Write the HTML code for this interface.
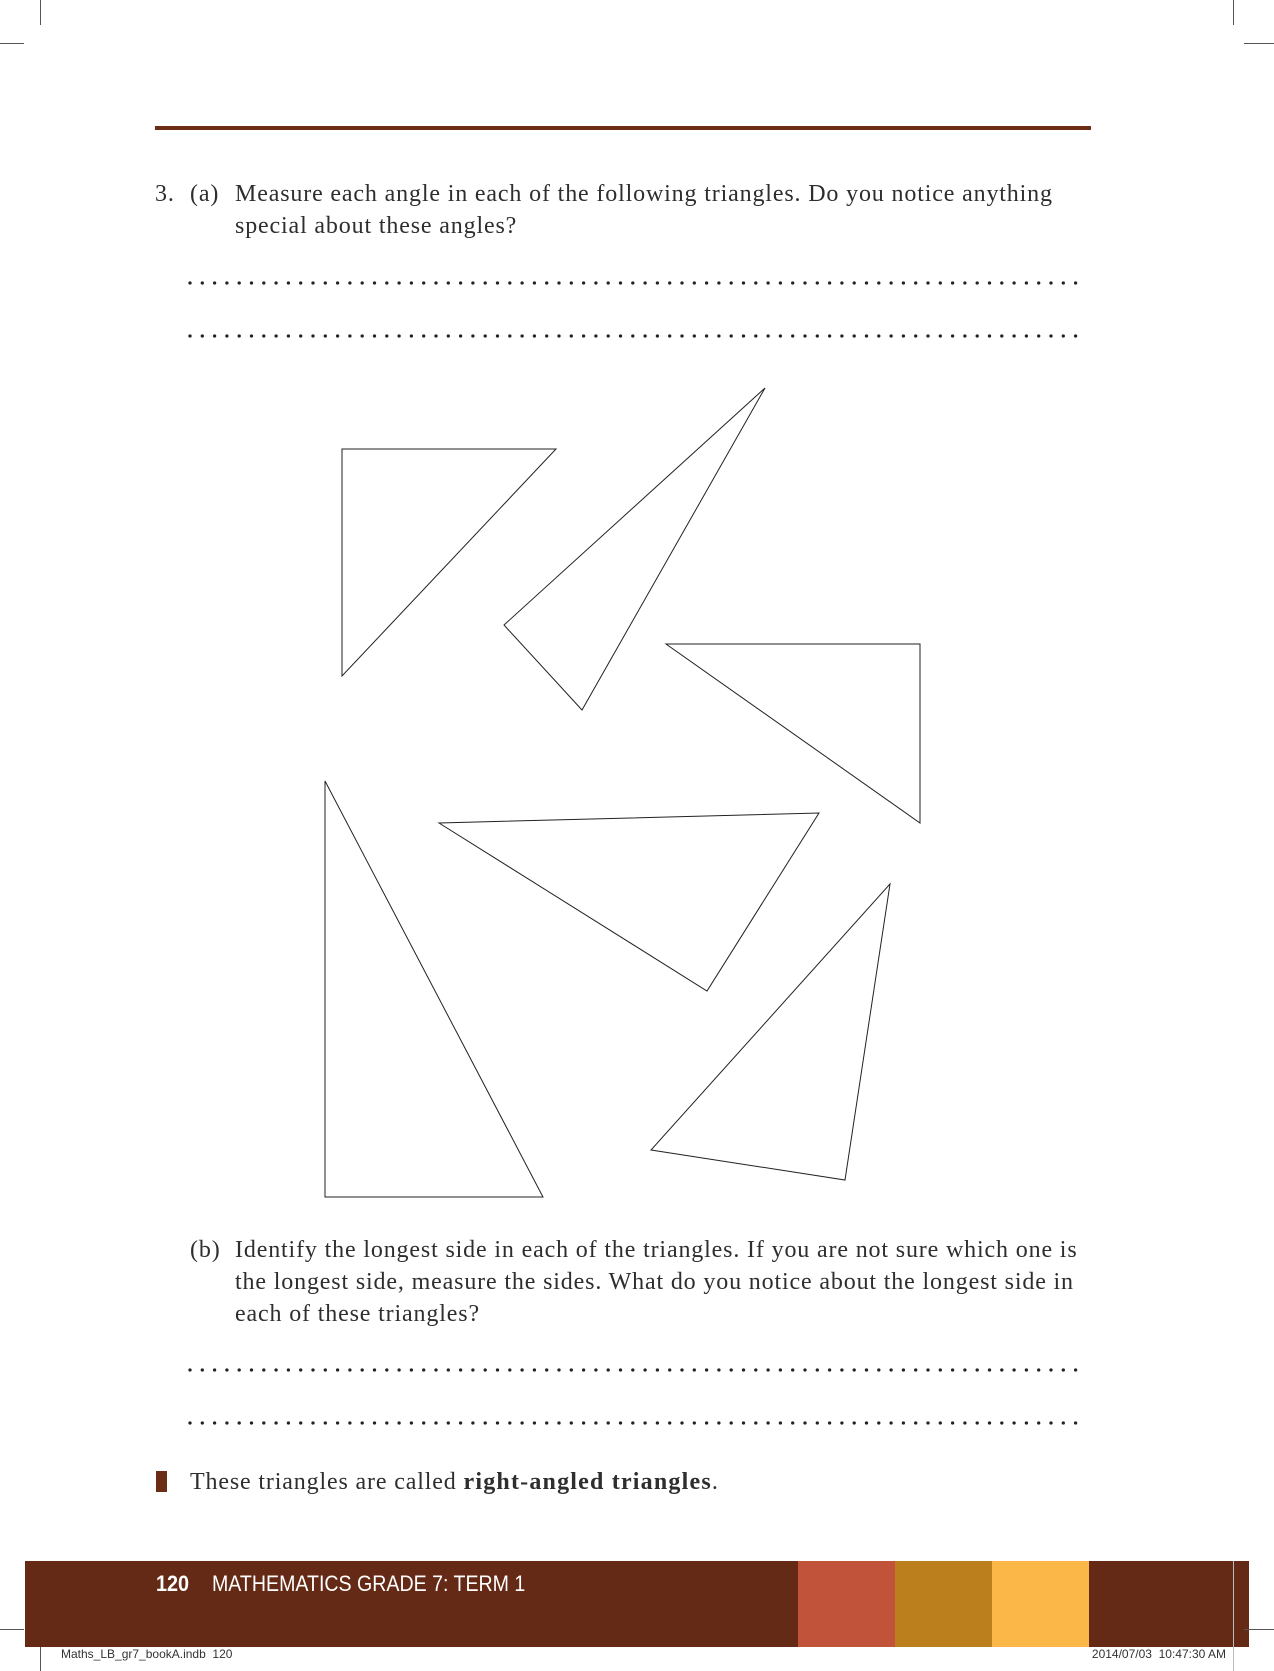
<!DOCTYPE html>
<html><head><meta charset="utf-8"><style>
html,body{margin:0;padding:0;background:#fff;}
body{width:1274px;height:1671px;position:relative;overflow:hidden;font-family:"Liberation Serif",serif;color:#2e2e2e;}
.a{position:absolute;white-space:nowrap;}
.t{font-size:24px;line-height:32px;letter-spacing:0.85px;}
.l{position:absolute;background:#555;}
</style></head><body>
<div class="l" style="left:40px;top:0;width:1px;height:25px"></div>
<div class="l" style="left:0;top:43px;width:24px;height:1px"></div>
<div class="l" style="left:1233px;top:0;width:1px;height:25px"></div>
<div class="l" style="left:1244px;top:43px;width:30px;height:1px"></div>

<div class="a" style="left:155px;top:126px;width:936px;height:4px;background:#6b2d16"></div>

<div class="a t" style="left:155px;top:178px">3.</div>
<div class="a t" style="left:190px;top:178px">(a)</div>
<div class="a t" style="left:235px;top:178px">Measure each angle in each of the following triangles. Do you notice anything</div>
<div class="a t" style="left:235px;top:210px">special about these angles?</div>

<svg class="a" style="left:0;top:0" width="1274" height="1671">
<g stroke="#222" stroke-width="3.3" stroke-linecap="round" stroke-dasharray="0 12.3">
<line x1="190" y1="283" x2="1082" y2="283"/>
<line x1="190" y1="336" x2="1082" y2="336"/>
<line x1="190" y1="1370" x2="1082" y2="1370"/>
<line x1="190" y1="1423" x2="1082" y2="1423"/>
</g>
<g fill="none" stroke="#222" stroke-width="1">
<polygon points="342,449 556,449 342,676"/>
<polygon points="765,388 504,625 582,710"/>
<polygon points="666,644 920,644 920,823"/>
<polygon points="325,781 325,1197 543,1197"/>
<polygon points="439,823 819,813 707,991"/>
<polygon points="890,884 651,1150 845,1180"/>
</g>
</svg>

<div class="a t" style="left:190px;top:1234px">(b)</div>
<div class="a t" style="left:235px;top:1234px">Identify the longest side in each of the triangles. If you are not sure which one is</div>
<div class="a t" style="left:235px;top:1266px">the longest side, measure the sides. What do you notice about the longest side in</div>
<div class="a t" style="left:235px;top:1298px">each of these triangles?</div>

<div class="a" style="left:156px;top:1471px;width:11px;height:21px;background:#6b2d16"></div>
<div class="a t" style="left:190px;top:1466px">These triangles are called <b style="letter-spacing:1.2px">right-angled triangles</b>.</div>

<div class="a" style="left:25px;top:1561px;width:1224px;height:86px;background:#642a16"></div>
<div class="a" style="left:798px;top:1561px;width:97px;height:86px;background:#c0533a"></div>
<div class="a" style="left:895px;top:1561px;width:97px;height:86px;background:#bc7f1e"></div>
<div class="a" style="left:992px;top:1561px;width:97px;height:86px;background:#fbb848"></div>
<div class="a" style="left:1233px;top:1561px;width:1px;height:110px;background:#bbb"></div>
<div class="a" style="left:156px;top:1571px;font-family:'Liberation Sans',sans-serif;font-size:22px;color:#fff;transform:scaleX(0.9);transform-origin:left"><b>120</b></div>
<div class="a" style="left:212px;top:1571px;font-family:'Liberation Sans',sans-serif;font-size:22px;color:#fff;transform:scaleX(0.89);transform-origin:left">MATHEMATICS GRADE 7: TERM 1</div>

<div class="l" style="left:40px;top:1647px;width:1px;height:24px"></div>
<div class="l" style="left:0;top:1629px;width:24px;height:1px"></div>
<div class="l" style="left:1244px;top:1629px;width:30px;height:1px"></div>
<div class="a" style="left:61px;top:1647px;font-family:'Liberation Sans',sans-serif;font-size:12px;color:#333">Maths_LB_gr7_bookA.indb &nbsp;120</div>
<div class="a" style="right:48px;top:1647px;font-family:'Liberation Sans',sans-serif;font-size:12px;color:#333">2014/07/03 &nbsp;10:47:30 AM</div>
</body></html>
